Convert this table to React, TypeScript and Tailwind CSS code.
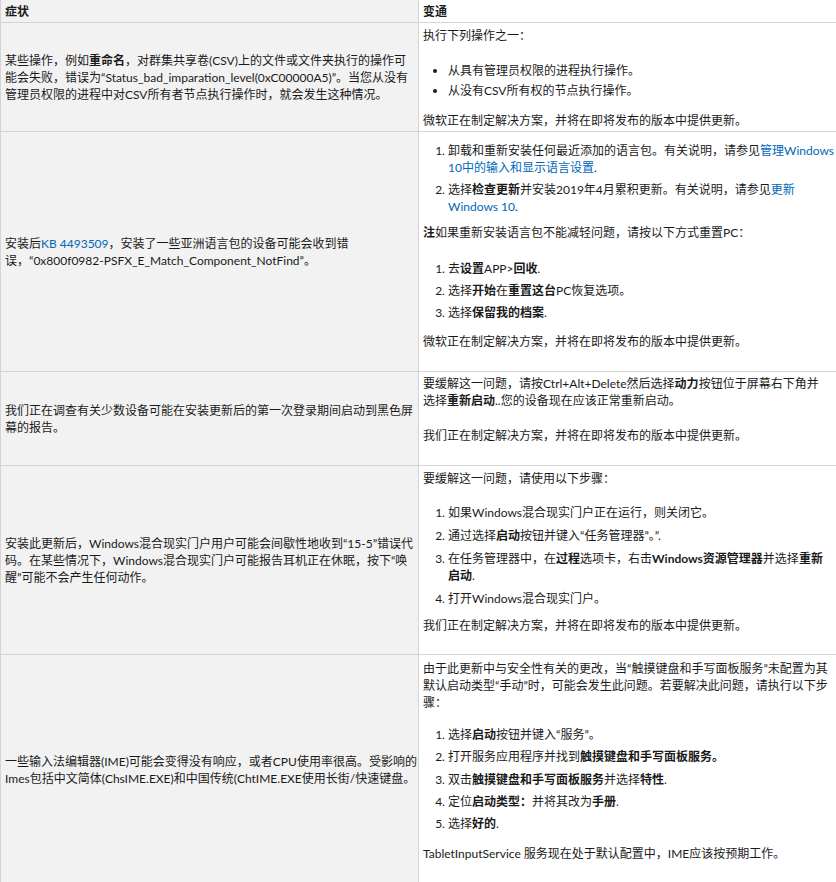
import type { ReactNode } from 'react';

const FONT = "font-['Lato','Noto_Sans_CJK_SC',sans-serif]";

function B({ children }: { children: ReactNode }) {
  return <b className="font-bold">{children}</b>;
}

function A({ children }: { children: ReactNode }) {
  return <a className="text-[#0067b8]">{children}</a>;
}

interface RowProps {
  symptom: ReactNode;
  children: ReactNode;
  cls: string; // padding of the workaround cell
}

function Row({ symptom, children, cls }: RowProps) {
  return (
    <>
      <div className="flex items-center border-b border-l border-r border-[#d4d4d4] bg-[#f2f2f2] pl-[4px] pr-[2px]">
        <p className="whitespace-nowrap">{symptom}</p>
      </div>
      <div className={`whitespace-nowrap border-b border-[#d4d4d4] bg-white pl-[4px] ${cls}`}>{children}</div>
    </>
  );
}

function Ol({ children, cls }: { children: ReactNode; cls: string }) {
  return <ol className={`list-decimal pl-[25px] [&>li+li]:mt-[5px] ${cls}`}>{children}</ol>;
}

const SOON = '微软正在制定解决方案，并将在即将发布的版本中提供更新。';
const WORKING = '我们正在制定解决方案，并将在即将发布的版本中提供更新。';

export default function App() {
  return (
    <div className={`w-[836px] overflow-hidden bg-white text-[12px] leading-[17px] text-[#1a1a1a] ${FONT}`}>
      <div className="grid grid-cols-[419px_1fr]">
        <div className="h-[23px] border-b border-l border-r border-[#d4d4d4] bg-[#f2f2f2] pl-[4px] pt-[3px] font-bold">
          症状
        </div>
        <div className="h-[23px] border-b border-[#d4d4d4] bg-white pl-[4px] pt-[3px] font-bold">变通</div>

        <Row
          cls="pt-[4px] pb-[2px]"
          symptom={
            <>
              某些操作，例如<B>重命名</B>，对群集共享卷(CSV)上的文件或文件夹执行的操作可
              <br />
              能会失败，错误为“Status_bad_imparation_level(0xC00000A5)”。当您从没有
              <br />
              管理员权限的进程中对CSV所有者节点执行操作时，就会发生这种情况。
            </>
          }
        >
          <p>执行下列操作之一：</p>
          <ul className="mt-[18px] list-disc pl-[25px] [&>li+li]:mt-[3px]">
            <li>从具有管理员权限的进程执行操作。</li>
            <li>从没有CSV所有权的节点执行操作。</li>
          </ul>
          <p className="mt-[13px]">{SOON}</p>
        </Row>

        <Row
          cls="pt-[5px] pb-[21px]"
          symptom={
            <>
              安装后<A>KB 4493509</A>，安装了一些亚洲语言包的设备可能会收到错
              <br />
              误，“0x800f0982-PSFX_E_Match_Component_NotFind”。
            </>
          }
        >
          <Ol cls="mt-[5px]">
            <li>
              卸载和重新安装任何最近添加的语言包。有关说明，请参见
              <A>
                管理Windows
                <br />
                10中的输入和显示语言设置
              </A>
              .
            </li>
            <li>
              选择<B>检查更新</B>并安装2019年4月累积更新。有关说明，请参见
              <A>
                更新
                <br />
                Windows 10
              </A>
              .
            </li>
          </Ol>
          <p className="mt-[9px]">
            <B>注</B>如果重新安装语言包不能减轻问题，请按以下方式重置PC：
          </p>
          <Ol cls="mt-[19px]">
            <li>
              去<B>设置</B>APP&gt;<B>回收</B>.
            </li>
            <li>
              选择<B>开始</B>在<B>重置这台</B>PC恢复选项。
            </li>
            <li>
              选择<B>保留我的档案</B>.
            </li>
          </Ol>
          <p className="mt-[12px]">{SOON}</p>
        </Row>

        <Row
          cls="pt-[3px] pb-[21px]"
          symptom={
            <>
              我们正在调查有关少数设备可能在安装更新后的第一次登录期间启动到黑色屏
              <br />
              幕的报告。
            </>
          }
        >
          <p>
            要缓解这一问题，请按Ctrl+Alt+Delete然后选择<B>动力</B>按钮位于屏幕右下角并
            <br />
            选择<B>重新启动</B>..您的设备现在应该正常重新启动。
          </p>
          <p className="mt-[18px]">{WORKING}</p>
        </Row>

        <Row
          cls="pt-[4px] pb-[20px]"
          symptom={
            <>
              安装此更新后，Windows混合现实门户用户可能会间歇性地收到“15-5”错误代
              <br />
              码。在某些情况下，Windows混合现实门户可能报告耳机正在休眠，按下“唤
              <br />
              醒”可能不会产生任何动作。
            </>
          }
        >
          <p>要缓解这一问题，请使用以下步骤：</p>
          <Ol cls="mt-[17px] [&>li+li]:!mt-[6px]">
            <li>如果Windows混合现实门户正在运行，则关闭它。</li>
            <li>
              通过选择<B>启动</B>按钮并键入“任务管理器”。”.
            </li>
            <li>
              在任务管理器中，在<B>过程</B>选项卡，右击<B>Windows资源管理器</B>并选择
              <B>
                重新
                <br />
                启动
              </B>
              .
            </li>
            <li>打开Windows混合现实门户。</li>
          </Ol>
          <p className="mt-[10px]">{WORKING}</p>
        </Row>

        <Row
          cls="pt-[5px] pb-[22px]"
          symptom={
            <>
              一些输入法编辑器(IME)可能会变得没有响应，或者CPU使用率很高。受影响的
              <br />
              Imes包括中文简体(ChsIME.EXE)和中国传统(ChtIME.EXE使用长街/快速键盘。
            </>
          }
        >
          <p>
            由于此更新中与安全性有关的更改，当“触摸键盘和手写面板服务”未配置为其
            <br />
            默认启动类型“手动”时，可能会发生此问题。若要解决此问题，请执行以下步
            <br />
            骤：
          </p>
          <Ol cls="mt-[15px] [&>li+li]:!mt-[5.3px]">
            <li>
              选择<B>启动</B>按钮并键入“服务”。
            </li>
            <li>
              打开服务应用程序并找到<B>触摸键盘和手写面板服务。</B>
            </li>
            <li>
              双击<B>触摸键盘和手写面板服务</B>并选择<B>特性</B>.
            </li>
            <li>
              定位<B>启动类型：</B>并将其改为<B>手册</B>.
            </li>
            <li>
              选择<B>好的</B>.
            </li>
          </Ol>
          <p className="mt-[13px]">TabletInputService 服务现在处于默认配置中，IME应该按预期工作。</p>
        </Row>
      </div>
    </div>
  );
}
